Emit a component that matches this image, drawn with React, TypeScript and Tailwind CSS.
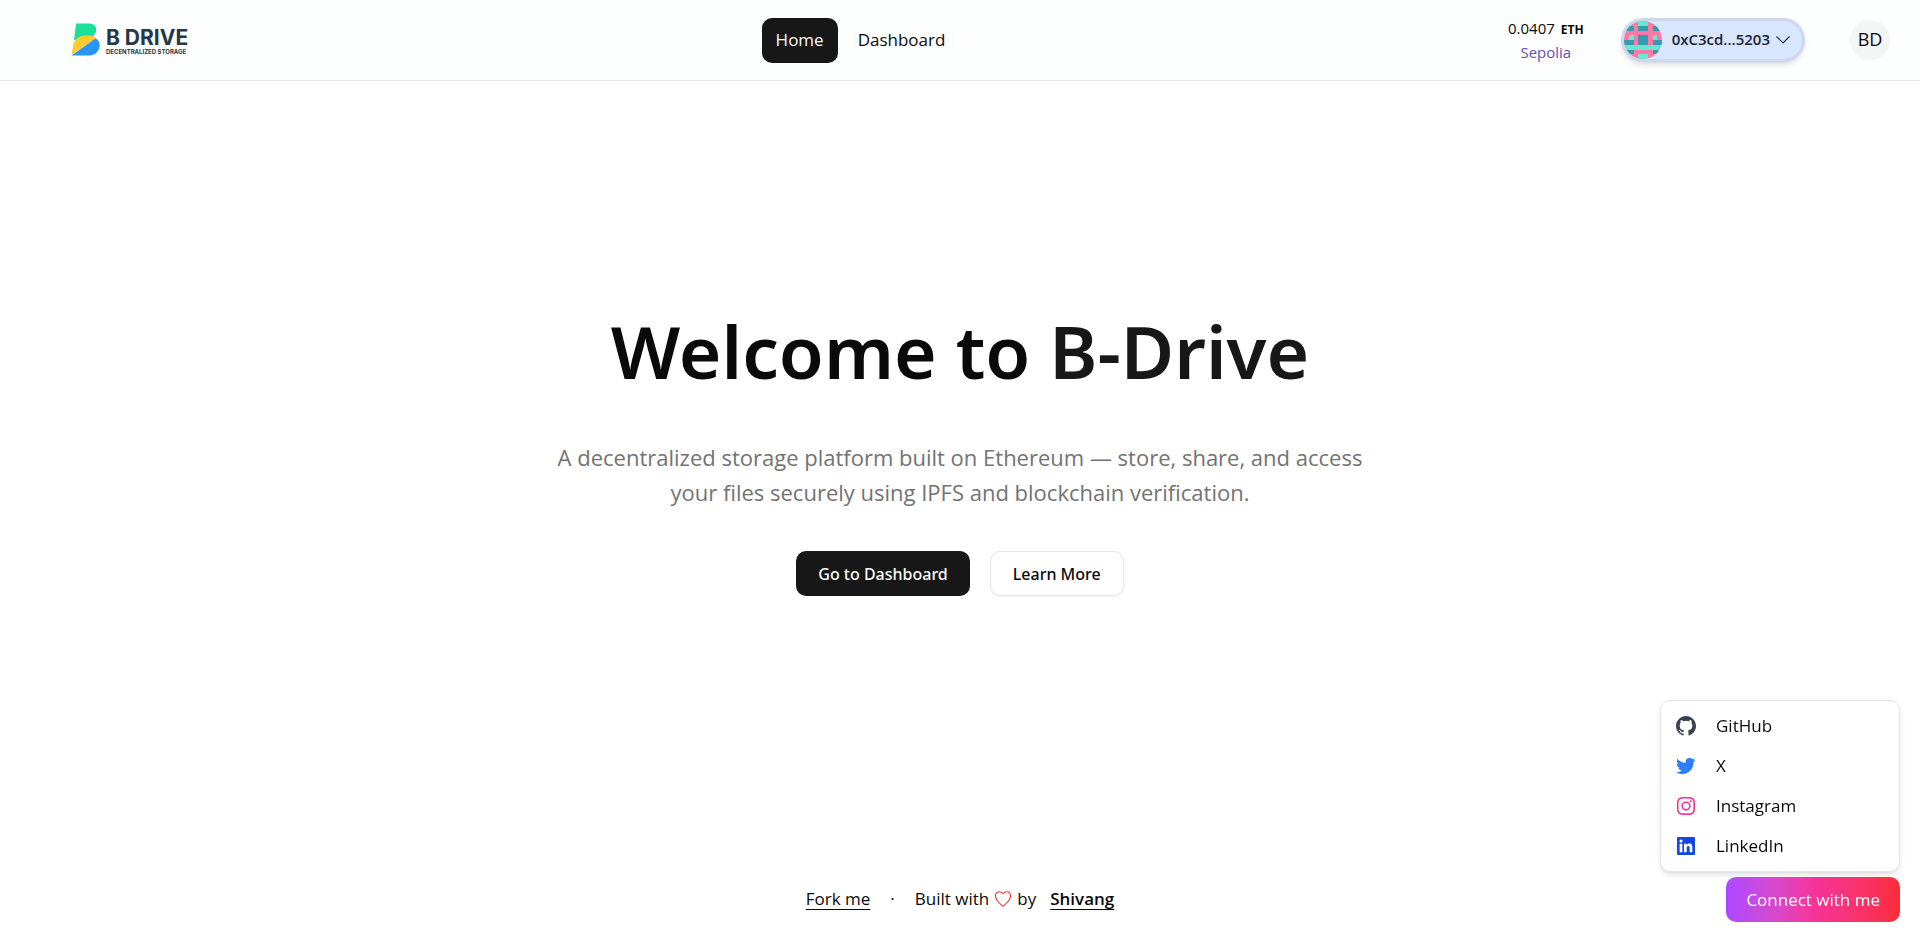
import type { ReactNode } from "react";
import { BiLogoGithub, BiLogoTwitter, BiLogoInstagram, BiLogoLinkedinSquare } from "react-icons/bi";
import { IoIosHeartEmpty } from "react-icons/io";

const MINT = "#66e8d0";
const TEAL = "#3a99b2";

// Left half of the identicon; the right half mirrors it.
const AVATAR_ROWS = ["...m", "tt.t", "....", ".m.t", "tt.t", "mmmm", "tt..", "...m"];

function Avatar() {
  return (
    <svg viewBox="0 0 8 8" className="size-[38px] rounded-full" shapeRendering="crispEdges" aria-hidden="true">
      <rect width="8" height="8" fill="#fa7aa2" />
      {AVATAR_ROWS.flatMap((row, y) =>
        (row + row.split("").reverse().join("")).split("").map((c, x) =>
          c === "." ? null : (
            <rect key={`${x}-${y}`} x={x} y={y} width="1" height="1" fill={c === "m" ? MINT : TEAL} />
          ),
        ),
      )}
    </svg>
  );
}

function Logo() {
  return (
    <a href="#home" className="flex items-center gap-[6px] pb-[2px] text-[#263746]" aria-label="B Drive home">
      <svg viewBox="0 0 29 33" className="h-[33px] w-[29px]" aria-hidden="true">
        <path d="M5 .5h13c5 0 7.500 3 7.200 6.500C25 10 23.500 12 21.500 13.500L16 15 3 17z" fill="#1be097" />
        <path d="M2.500 20C5 15.500 8.500 13 13 12.600h7.500c1.700.6 3 1.400 4.200 2.700L.5 32z" fill="#ffcb2f" />
        <path d="M.5 32.500 24.700 15.300c3.500 2.200 4.600 5.700 3.600 9.400-1.300 4.800-5.300 7.800-11 7.800z" fill="#2795fb" />
      </svg>
      <span className="flex flex-col pt-[5px] font-['Inter',sans-serif] whitespace-nowrap">
        <span className="text-[21px] leading-[20px] font-bold">B DRIVE</span>
        <span className="text-[6px] leading-[8px] font-bold">DECENTRALIZED STORAGE</span>
      </span>
    </a>
  );
}

function SocialLink({ href, icon, children }: { href: string; icon: ReactNode; children: ReactNode }) {
  return (
    <a href={href} className="flex h-10 items-center gap-[18px] px-[13px]">
      {icon}
      {children}
    </a>
  );
}

export default function App() {
  return (
    <div className="flex min-h-screen flex-col bg-white font-['Open_Sans',sans-serif] text-[17px] text-neutral-950">
      <header className="flex h-[81px] items-center justify-between border-b border-neutral-200 bg-[#fdfefe] pr-[30px] pl-[71px]">
        <div className="w-[160px]">
          <Logo />
        </div>
        <nav className="flex items-center gap-[6px]">
          <a href="#home" className="flex h-[45px] items-center rounded-[10px] bg-neutral-900 px-[14px] text-neutral-50">
            Home
          </a>
          <a href="#dashboard" className="flex h-[45px] items-center rounded-[10px] px-[14px]">
            Dashboard
          </a>
        </nav>
        <div className="flex w-[400px] items-center justify-end">
          <div className="mr-[37px] flex flex-col items-center text-[15px] leading-[23px]">
            <span className="flex items-baseline gap-[6px]">
              0.0407 <span className="text-[12px] font-bold">ETH</span>
            </span>
            <span className="text-[#6450b8]">Sepolia</span>
          </div>
          <button
            type="button"
            className="mr-[45px] flex h-[44px] items-center rounded-full border-[3px] border-[#cbd8ee] bg-[#d9e6ff] pr-3 text-[15px] leading-[22px] font-semibold text-[#1c2433] shadow-md"
          >
            <Avatar />
            <span className="mr-[6px] ml-[10px] pb-[2px]">0xC3cd...5203</span>
            <svg viewBox="0 0 14 8" className="h-2 w-[14px]" fill="none" stroke="currentColor" strokeWidth="1.200" aria-hidden="true">
              <path d="M.5.500 7 7 13.500.500" />
            </svg>
          </button>
          <button type="button" className="size-10 rounded-full bg-neutral-100 pb-[2px] text-[18px]">
            BD
          </button>
        </div>
      </header>

      <main className="flex grow flex-col items-center pt-[225px] text-center">
        <h1 className="font-['Noto_Sans',sans-serif] text-[73px] leading-[90px] font-semibold">
          Welcome to <span className="text-neutral-900">B-Drive</span>
        </h1>
        <p className="mt-[44px] max-w-[820px] text-[22px] leading-[35px] text-neutral-500">
          A decentralized storage platform built on Ethereum — store, share, and access your files securely using IPFS
          and blockchain verification.
        </p>
        <div className="mt-[41px] flex gap-5 font-['Noto_Sans',sans-serif] text-base font-medium">
          <a href="#dashboard" className="flex h-[45px] items-center rounded-[10px] bg-neutral-900 px-[22px] text-neutral-50">
            Go to Dashboard
          </a>
          <a href="#about" className="flex h-[45px] items-center rounded-[10px] border border-neutral-200 px-[22px] shadow-xs">
            Learn More
          </a>
        </div>
      </main>

      <footer className="flex items-center justify-center pb-[25px] leading-[24px]">
        <a href="#fork" className="underline underline-offset-4">
          Fork me
        </a>
        <span className="mx-5">·</span>
        <span className="flex items-center gap-1">
          Built with <IoIosHeartEmpty className="size-5 text-red-500" /> by
        </span>
        <a href="#author" className="ml-[14px] font-semibold underline underline-offset-4">
          Shivang
        </a>
      </footer>

      <aside className="fixed right-5 bottom-[14px] flex flex-col items-end gap-[5px]">
        <div className="w-[240px] rounded-[10px] border border-neutral-200 bg-white py-[5px] shadow-md">
          <SocialLink href="#github" icon={<BiLogoGithub className="size-6 text-gray-700" />}>
            GitHub
          </SocialLink>
          <SocialLink href="#x" icon={<BiLogoTwitter className="size-6 text-blue-500" />}>
            X
          </SocialLink>
          <SocialLink href="#instagram" icon={<BiLogoInstagram className="size-6 text-pink-500" />}>
            Instagram
          </SocialLink>
          <SocialLink href="#linkedin" icon={<BiLogoLinkedinSquare className="size-6 text-blue-700" />}>
            LinkedIn
          </SocialLink>
        </div>
        <button
          type="button"
          className="h-[45px] rounded-[10px] bg-linear-to-r from-purple-500 via-pink-500 to-red-500 px-5 text-white"
        >
          Connect with me
        </button>
      </aside>
    </div>
  );
}
